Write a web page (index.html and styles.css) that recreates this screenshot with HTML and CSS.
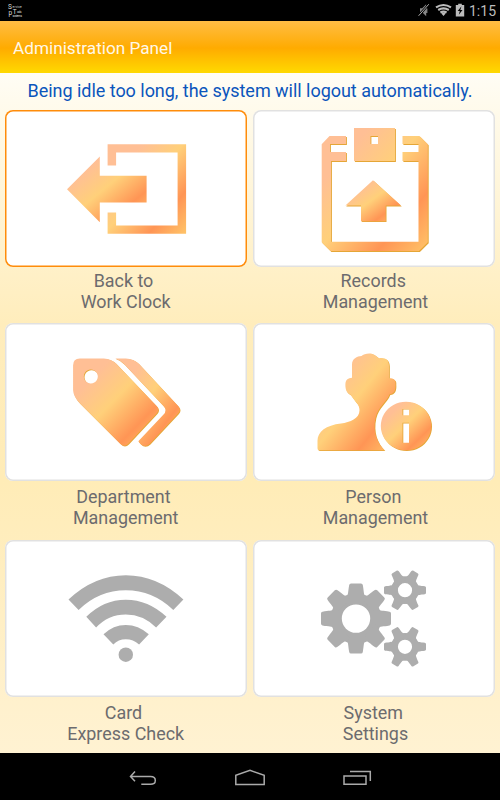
FILE: index.html
```
<!DOCTYPE html>
<html lang="en">
<head>
<meta charset="utf-8">
<title>Administration Panel</title>
<link rel="stylesheet" href="styles.css">
</head>
<body>
<div class="status">
  <svg class="app-icon" viewBox="8 3 15 14">
    <text class="big" x="8" y="8.8">S</text><text class="tiny" x="12.6" y="8.4" textLength="9">ervice</text>
    <text class="big" x="8.6" y="14.8">p</text><text class="big" x="12.8" y="14.2">T</text><text class="tiny" x="17" y="13.2" textLength="4.5">ools</text>
    <text class="tiny" x="12.5" y="17" textLength="9.5">systems</text>
  </svg>
  <svg class="tray" viewBox="415 0 54 21">
    <path d="M420 8.2h2.2l4-4v12l-4-4H420z" fill="#888"/>
    <path d="M418.6 15.8 428.8 4.2" stroke="#000" stroke-width="2.4"/>
    <path d="M418.6 15.8 428.8 4.2M426.8 8.5v4.5" stroke="#aaa" stroke-width="1" fill="none"/>
    <g fill="none" stroke="#bcbcbc" stroke-width="2.1">
      <path d="M436 7.4Q443.5 2.6 451 7.4M438.2 10Q443.5 6.8 448.8 10M440.4 12.5Q443.5 10.8 446.6 12.5"/>
    </g>
    <path d="M441.3 13.4Q443.5 12.3 445.7 13.4L443.5 16z" fill="#bcbcbc"/>
    <path d="M455.8 5h2.4V3.7h3.6V5h2.4v11.4h-8.4z" fill="#bcbcbc"/>
    <path d="M461.5 6.3 457.7 11h2.1l-1 3.7 3.7-4.8h-2.2z" fill="#000"/>
  </svg>
  <span class="clock">1:15</span>
</div>
<header class="header">Administration Panel</header>
<main class="panel">
  <p class="notice">Being idle too long, the system will logout automatically.</p>
  <div class="grid">
    <section class="item">
      <div class="card selected">
        <svg viewBox="5.2 109.5 242 157.3">
          <defs>
            <linearGradient id="warm" x1="0" y1="0" x2="1" y2="1">
              <stop offset=".22" stop-color="#ffbf95"/><stop offset=".48" stop-color="#ffd07a"/>
              <stop offset=".76" stop-color="#ff9555"/><stop offset="1" stop-color="#ffc468"/>
            </linearGradient>
          </defs>
          <g fill="url(#warm)">
            <path d="M67.2 188.7 100 156v19.3h46.8V202H100v19.7z"/>
            <path d="M107.8 143.8h78.5v89.4h-78.5V212h8.5v13h61.5v-73h-61.5v13h-8.5z"/>
          </g>
        </svg>
      </div>
      <p class="label">Back to 
Work Clock</p>
    </section>
    <section class="item">
      <div class="card">
        <svg viewBox="253 109.5 242 157.3">
          <defs>
            <path id="clipboard" fill-rule="evenodd" d="M354 127.5h41v33h-41zM370.5 135.5v8h7.5v-8zM329.5 135.5H346v8H330v8h16v9h-15v80.8h87.5V160.500h-16v-9h16v-8h-16v-8h17l8.300 8.300v98l-8.800 8.800h-88.500l-8.800-8.800v-98z"/>
            <path id="up" d="M373 179.700 401 205h-15.300v15.700H361V205h-15.600z"/>
          </defs>
          <g fill="#e5a636"><use href="#clipboard" x=".9" y=".9"/><use href="#up" x=".8" y=".9"/></g>
          <g fill="url(#warm)"><use href="#clipboard"/><use href="#up"/></g>
        </svg>
      </div>
      <p class="label">Records 
Management</p>
    </section>
    <section class="item">
      <div class="card">
        <svg viewBox="5.2 323.300 242 157.300">
          <defs>
            <path id="tag" fill-rule="evenodd" d="M80 358.700H104Q111.500 359.200 116 363.500L157 406.500Q160 410 157 413.500L128.500 444Q124.500 448 120.500 444L80 403.500Q73.300 396.500 73.300 390V365.500Q73.300 358.700 80 358.700ZM91 369.800a7 7 0 1 0 .01 0Z"/>
            <path id="tag-back" d="M115.500 358.700H126Q134 359.200 139 364L178.500 406.500Q181.500 410 178.500 413.500L150 444Q145 448.500 140.500 444L138.500 441.500 163.500 415Q168 410.500 163.500 406L124.500 364.500Q120.500 360.500 115.500 358.700Z"/>
          </defs>
          <g fill="#e5a636"><use href="#tag" x=".7" y=".7"/><use href="#tag-back" x=".7" y=".7"/></g>
          <g fill="url(#warm)"><use href="#tag"/><use href="#tag-back"/></g>
        </svg>
      </div>
      <p class="label">Department 
Management</p>
    </section>
    <section class="item">
      <div class="card">
        <svg viewBox="253 323.300 242 157.300">
          <defs>
            <path id="person" d="M352 378V365C352 359 357 356.500 361.500 356.300C364 353.500 372 352.800 375 355.500L379 358.500C386 357.500 389 360.500 389 366V378.500C394 378.500 396 380.500 395.500 384C396 391 394 394 389.500 394.500C387 402 378 407 375.500 418C372.500 432 377 443 384.500 450.500H319Q317.500 450.500 317.500 448.500V441C317.500 432 326 425.500 341 423.800C350 422.500 359.500 419 359.500 410.500Q359.500 406 356 402.500L350.500 395C346 393 345 388 345.500 383Q346 378.500 352 378Z"/>
            <path id="info" fill-rule="evenodd" d="M406 402a25.200 24.300 0 1 0 .01 0ZM402.500 409.200h6.500v6.300h-6.500zM402.500 423h6.500v20h-6.500z"/>
          </defs>
          <g fill="#e5a636"><use href="#person" x=".8" y=".8"/><use href="#info" x=".8" y=".7"/></g>
          <g fill="url(#warm)"><use href="#person"/><use href="#info"/></g>
        </svg>
      </div>
      <p class="label">Person 
Management</p>
    </section>
    <section class="item">
      <div class="card">
        <svg viewBox="5.200 539.800 242 157.300">
          <g fill="#adadad">
            <path d="M68.700 599.300Q94.500 575 126 575T183.600 599.300L173.500 609.700Q153 590 126 590T78.800 609.700Z"/>
            <path d="M86.500 616.600Q103.500 599.500 126 599.500T166.700 616.600L156.300 627.400Q143.500 614.300 126 614.300T96.300 627.400Z"/>
            <path d="M103.700 634Q113.500 624.700 126 624.700T149 634L139.300 644.400Q133.500 639 126 639T113.500 644.400Z"/>
            <circle cx="126" cy="654.500" r="7.200"/>
          </g>
        </svg>
      </div>
      <p class="label">Card 
Express Check</p>
    </section>
    <section class="item">
      <div class="card">
        <svg viewBox="253 539.800 242 157.300">
          <defs>
            <path id="tooth" d="M-9.500-22C-7.500-24-8-27-6.800-33.500Q-6.500-35-5-35H5Q6.500-35 6.800-33.500C8-27 7.500-24 9.500-22V-18H-9.500Z"/>
            <path id="pin" d="M-6-11.500C-4.500-13.500-4.600-15-4-19.800Q-3.700-21-2.800-21H2.800Q3.700-21 4-19.800C4.600-15 4.500-13.500 6-11.500V-9H-6Z"/>
            <g id="cog">
              <circle r="10.500" fill="none" stroke="#adadad" stroke-width="6.800"/>
              <use href="#pin" transform="rotate(30)"/><use href="#pin" transform="rotate(90)"/><use href="#pin" transform="rotate(150)"/>
              <use href="#pin" transform="rotate(210)"/><use href="#pin" transform="rotate(270)"/><use href="#pin" transform="rotate(330)"/>
            </g>
          </defs>
          <g fill="#adadad">
            <g transform="translate(356 618.400)">
              <circle r="19.700" fill="none" stroke="#adadad" stroke-width="11"/>
              <use href="#tooth"/><use href="#tooth" transform="rotate(45)"/><use href="#tooth" transform="rotate(90)"/><use href="#tooth" transform="rotate(135)"/>
              <use href="#tooth" transform="rotate(180)"/><use href="#tooth" transform="rotate(225)"/><use href="#tooth" transform="rotate(270)"/><use href="#tooth" transform="rotate(315)"/>
            </g>
            <use href="#cog" x="405" y="590"/><use href="#cog" x="405" y="646.600"/>
          </g>
        </svg>
      </div>
      <p class="label">System 
Settings</p>
    </section>
  </div>
</main>
<nav class="nav">
  <svg viewBox="128 766 32 24"><path d="M136 771.500 131.500 776.500 136 781.200M131.500 776.500H151.500Q156.300 776.500 156.300 780.400T151.500 784.300H142.300"/></svg>
  <svg viewBox="234 766 32 24"><path d="M235.800 784.400V775.400L250 770.400 264.200 775.400V784.400Z"/></svg>
  <svg viewBox="341 766 32 24"><path d="M344 776h22v8.200h-22zM350 771.500h20.300V781"/></svg>
</nav>
</body>
</html>
```
FILE: styles.css
```
* { box-sizing: border-box; }
body {
  margin: 0;
  width: 500px;
  height: 800px;
  display: flex;
  flex-direction: column;
  overflow: hidden;
  font-family: Roboto, sans-serif;
  background: #000;
}
p { margin: 0; }
svg { display: block; }
.status {
  height: 20.500px;
  display: flex;
  align-items: center;
  padding-left: 8px;
  color: #bcbcbc;
}
.app-icon { width: 15px; height: 14px; margin-top: -1px; fill: #ddd; }
.big { font-size: 6.500px; }
.tiny { font-size: 3px; }
.tray { width: 54px; height: 21px; margin-left: auto; }
.clock {
  width: 31px;
  padding-top: 1px;
  font-size: 14px;
  line-height: 20px;
  white-space: nowrap;
}
.header {
  height: 52.500px;
  padding-left: 13px;
  line-height: 54px;
  font-size: 17.200px;
  color: #fff8e8;
  background: linear-gradient(#ffbd45, #ffab00 52%, #ffd900);
}
.panel {
  height: 680px;
  background: linear-gradient(#fffdf5 0, #fffaea 6%, #ffedbc 37%, #ffecb7 60%, #fff2d2);
}
.notice {
  height: 36.500px;
  line-height: 36px;
  text-align: center;
  font-size: 18px;
  letter-spacing: -.03px;
  color: #0b55bc;
  white-space: nowrap;
}
.grid {
  display: grid;
  grid-template-columns: 247.200px 247px;
  grid-template-rows: 213.800px 216.500px 213px;
  padding-left: 5.200px;
}
.item { display: flex; flex-direction: column; }
.item:nth-child(even) { padding-left: .6px; }
.card {
  width: 242px;
  height: 157.300px;
  background: #fff;
  border-radius: 8px;
  box-shadow: inset 0 0 0 1.500px #e1e1e1;
}
.card.selected { box-shadow: inset 0 0 0 1.500px #ff8c0a; }
.card svg { width: 242px; height: 157.300px; }
.label {
  width: 241px;
  margin-top: 3px;
  white-space: pre;
  text-align: center;
  font-size: 17.900px;
  line-height: 21px;
  color: #6c6b6e;
}
.item:nth-child(even) .label { width: 245px; }
.item:nth-child(n+3) .label { margin-top: 5px; }
.nav {
  flex: 1;
  display: flex;
  justify-content: center;
  gap: 75px;
  padding-top: 12.500px;
}
.nav svg { width: 32px; height: 24px; fill: none; stroke: #aaa; stroke-width: 1.500; }
```
